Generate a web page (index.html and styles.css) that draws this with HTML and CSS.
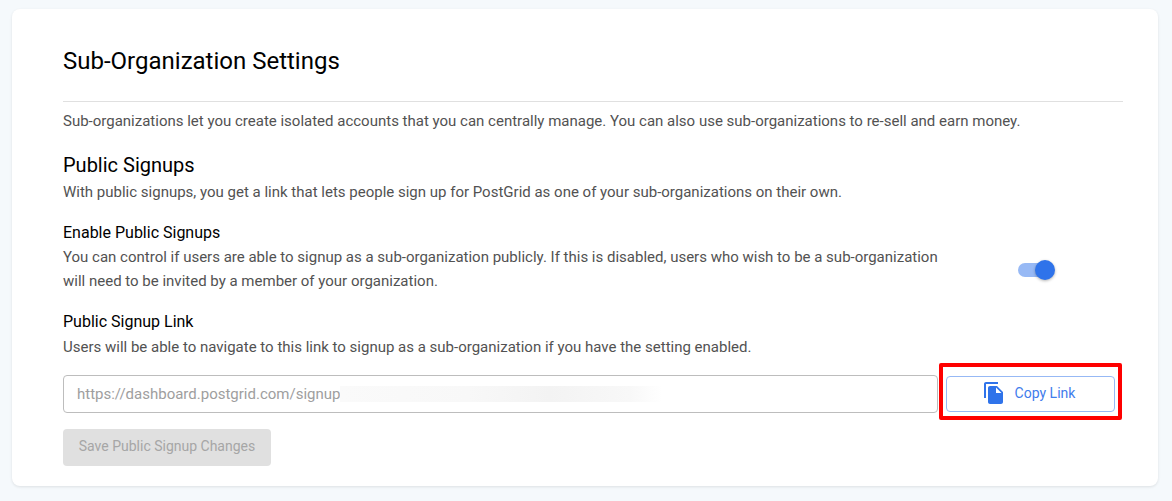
FILE: index.html
```html
<!DOCTYPE html>
<html lang="en">
<head>
    <meta charset="UTF-8">
    <title>Sub-Organization Settings</title>
    <link rel="stylesheet" href="styles.css">
</head>
<body>
    <div class="card">
        <h1 class="title">Sub-Organization Settings</h1>
        <hr class="rule">
        <p class="text">Sub-organizations let you create isolated accounts that you can centrally manage. You can also use sub-organizations to re-sell and earn money.</p>

        <h2 class="section-title">Public Signups</h2>
        <p class="text">With public signups, you get a link that lets people sign up for PostGrid as one of your sub-organizations on their own.</p>

        <div class="setting">
            <div class="setting-info">
                <h3 class="label">Enable Public Signups</h3>
                <p class="text">You can control if users are able to signup as a sub-organization publicly. If this is disabled, users who wish to be a sub-organization will need to be invited by a member of your organization.</p>
            </div>
            <div class="toggle-cell">
                <div class="toggle">
                    <span class="toggle-track"></span>
                    <span class="toggle-thumb"></span>
                </div>
            </div>
        </div>

        <h3 class="label link-label">Public Signup Link</h3>
        <p class="text">Users will be able to navigate to this link to signup as a sub-organization if you have the setting enabled.</p>

        <div class="link-row">
            <div class="link-input">
                <span class="link-value">https://dashboard.postgrid.com/signup</span>
                <span class="link-blur"></span>
            </div>
            <div class="copy-cell">
                <button class="copy-btn">
                    <svg class="copy-icon" width="24" height="24" viewBox="0 0 24 24" fill="#2f73ea">
                        <path d="M16 1H4C2.9 1 2 1.9 2 3v14h2V3h12V1z"/>
                        <path d="M15 5H8C6.9 5 6 5.9 6 7v14c0 1.1.9 2 2 2h11c1.1 0 2-.9 2-2V11l-6-6zm-1 7V6.5l5.5 5.5H14z"/>
                    </svg>
                    <span class="copy-text">Copy Link</span>
                </button>
                <span class="highlight"></span>
            </div>
        </div>

        <button class="save-btn" disabled><span class="save-text">Save Public Signup Changes</span></button>
    </div>
</body>
</html>
```

FILE: styles.css
```css
body {
    margin: 0;
    padding: 9px 14px 15px 12px;
    background-color: #f5f9fc;
    font-family: Roboto, "Liberation Sans", sans-serif;
    color: #000;
}
.card {
    background-color: #fff;
    border-radius: 8px;
    box-shadow: 0 1px 3px rgba(0, 0, 0, 0.1);
    padding: 36px 35px 19px 51px;
    height: 422px;
}
.title {
    margin: 0;
    font-size: 24px;
    font-weight: 400;
    line-height: 32px;
}
.rule {
    border: 0;
    border-top: 1px solid #e0e0e0;
    margin: 24px 0 0;
}
.text {
    margin: 0;
    font-size: 15px;
    line-height: 24px;
    color: #525252;
}
.rule + .text {
    margin-top: 7px;
}
.section-title {
    margin: 18px 0 0;
    font-size: 20px;
    font-weight: 400;
    line-height: 28px;
}
.section-title + .text {
    margin-top: 1px;
}
.setting {
    display: flex;
    margin-top: 18px;
}
.setting-info {
    width: 880px;
}
.label {
    margin: 0;
    font-size: 16px;
    font-weight: 400;
    line-height: 22px;
}
.label + .text {
    margin-top: 1px;
}
.toggle-cell {
    flex: 1;
    display: flex;
    align-items: center;
    padding-top: 24px;
    padding-left: 75px;
}
.toggle {
    position: relative;
    width: 37px;
    height: 20px;
}
.toggle-track {
    position: absolute;
    left: 0;
    top: 3px;
    width: 34px;
    height: 14px;
    border-radius: 7px;
    background-color: #97b9f5;
}
.toggle-thumb {
    position: absolute;
    right: 0;
    top: 0;
    width: 20px;
    height: 20px;
    border-radius: 50%;
    background-color: #2f73ea;
    box-shadow: 0 1px 3px rgba(0, 0, 0, 0.3);
}
.link-label {
    margin-top: 18px;
}
.link-label + .text {
    margin-top: 2px;
}
.link-row {
    display: flex;
    margin-top: 16px;
}
.link-input {
    box-sizing: border-box;
    width: 875px;
    height: 38px;
    border: 1px solid #bdbdbd;
    border-radius: 4px;
    padding: 0 13px;
    display: flex;
    align-items: center;
    font-size: 15px;
    color: #9e9e9e;
}
.link-blur {
    width: 322px;
    height: 16px;
    background: linear-gradient(90deg, #fafafa, #f8f8f8 40%, #f3f3f3 65%, #f8f8f8 90%, #fff);
}
.copy-cell {
    position: relative;
    margin-left: 8px;
}
.copy-btn {
    box-sizing: border-box;
    width: 169px;
    height: 36px;
    margin-top: 1px;
    padding: 0 4px 2px 0;
    background-color: #fff;
    border: 1px solid #97b9f5;
    border-radius: 4px;
    display: flex;
    align-items: center;
    justify-content: center;
    gap: 8px;
    font-family: inherit;
    font-size: 14px;
    color: #3f7cec;
}
.copy-icon {
    margin-right: 1px;
}
.highlight {
    position: absolute;
    left: -7px;
    top: -12px;
    width: 175px;
    height: 49px;
    border: 4px solid #fe0000;
    border-radius: 2px;
}
.save-btn {
    display: block;
    margin-top: 16px;
    width: 208px;
    height: 37px;
    padding: 0 0 3px;
    border: 0;
    border-radius: 4px;
    background-color: #e0e0e0;
    font-family: inherit;
    font-size: 14px;
    color: #a6a6a6;
}
```
